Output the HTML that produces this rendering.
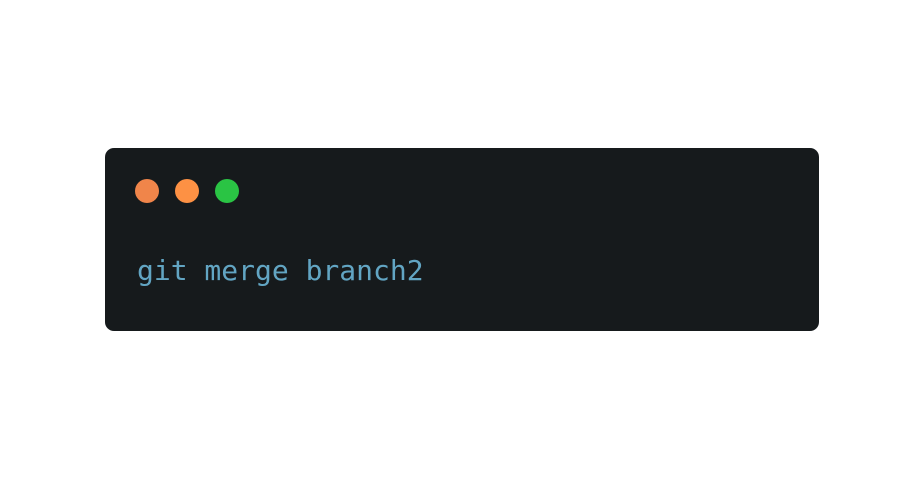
<!DOCTYPE html>
<html><head><style>
body{margin:0;width:922px;height:480px;background:#fff;position:relative;overflow:hidden}
.box{position:absolute;left:105px;top:148px;width:714px;height:183px;background:#161a1c;border-radius:9px}
.d{position:absolute;top:179px;width:24px;height:24px;border-radius:50%}
.t{position:absolute;left:137px;top:253px;font-family:"DejaVu Sans Mono","Liberation Mono",monospace;font-size:28px;color:#62a5c3;white-space:pre;line-height:36px}
</style></head><body>
<div class="box"></div>
<div class="d" style="left:135px;background:#f0854a"></div>
<div class="d" style="left:175px;background:#fd9144"></div>
<div class="d" style="left:215px;background:#2ac444"></div>
<div class="t">git merge branch2</div>
</body></html>
